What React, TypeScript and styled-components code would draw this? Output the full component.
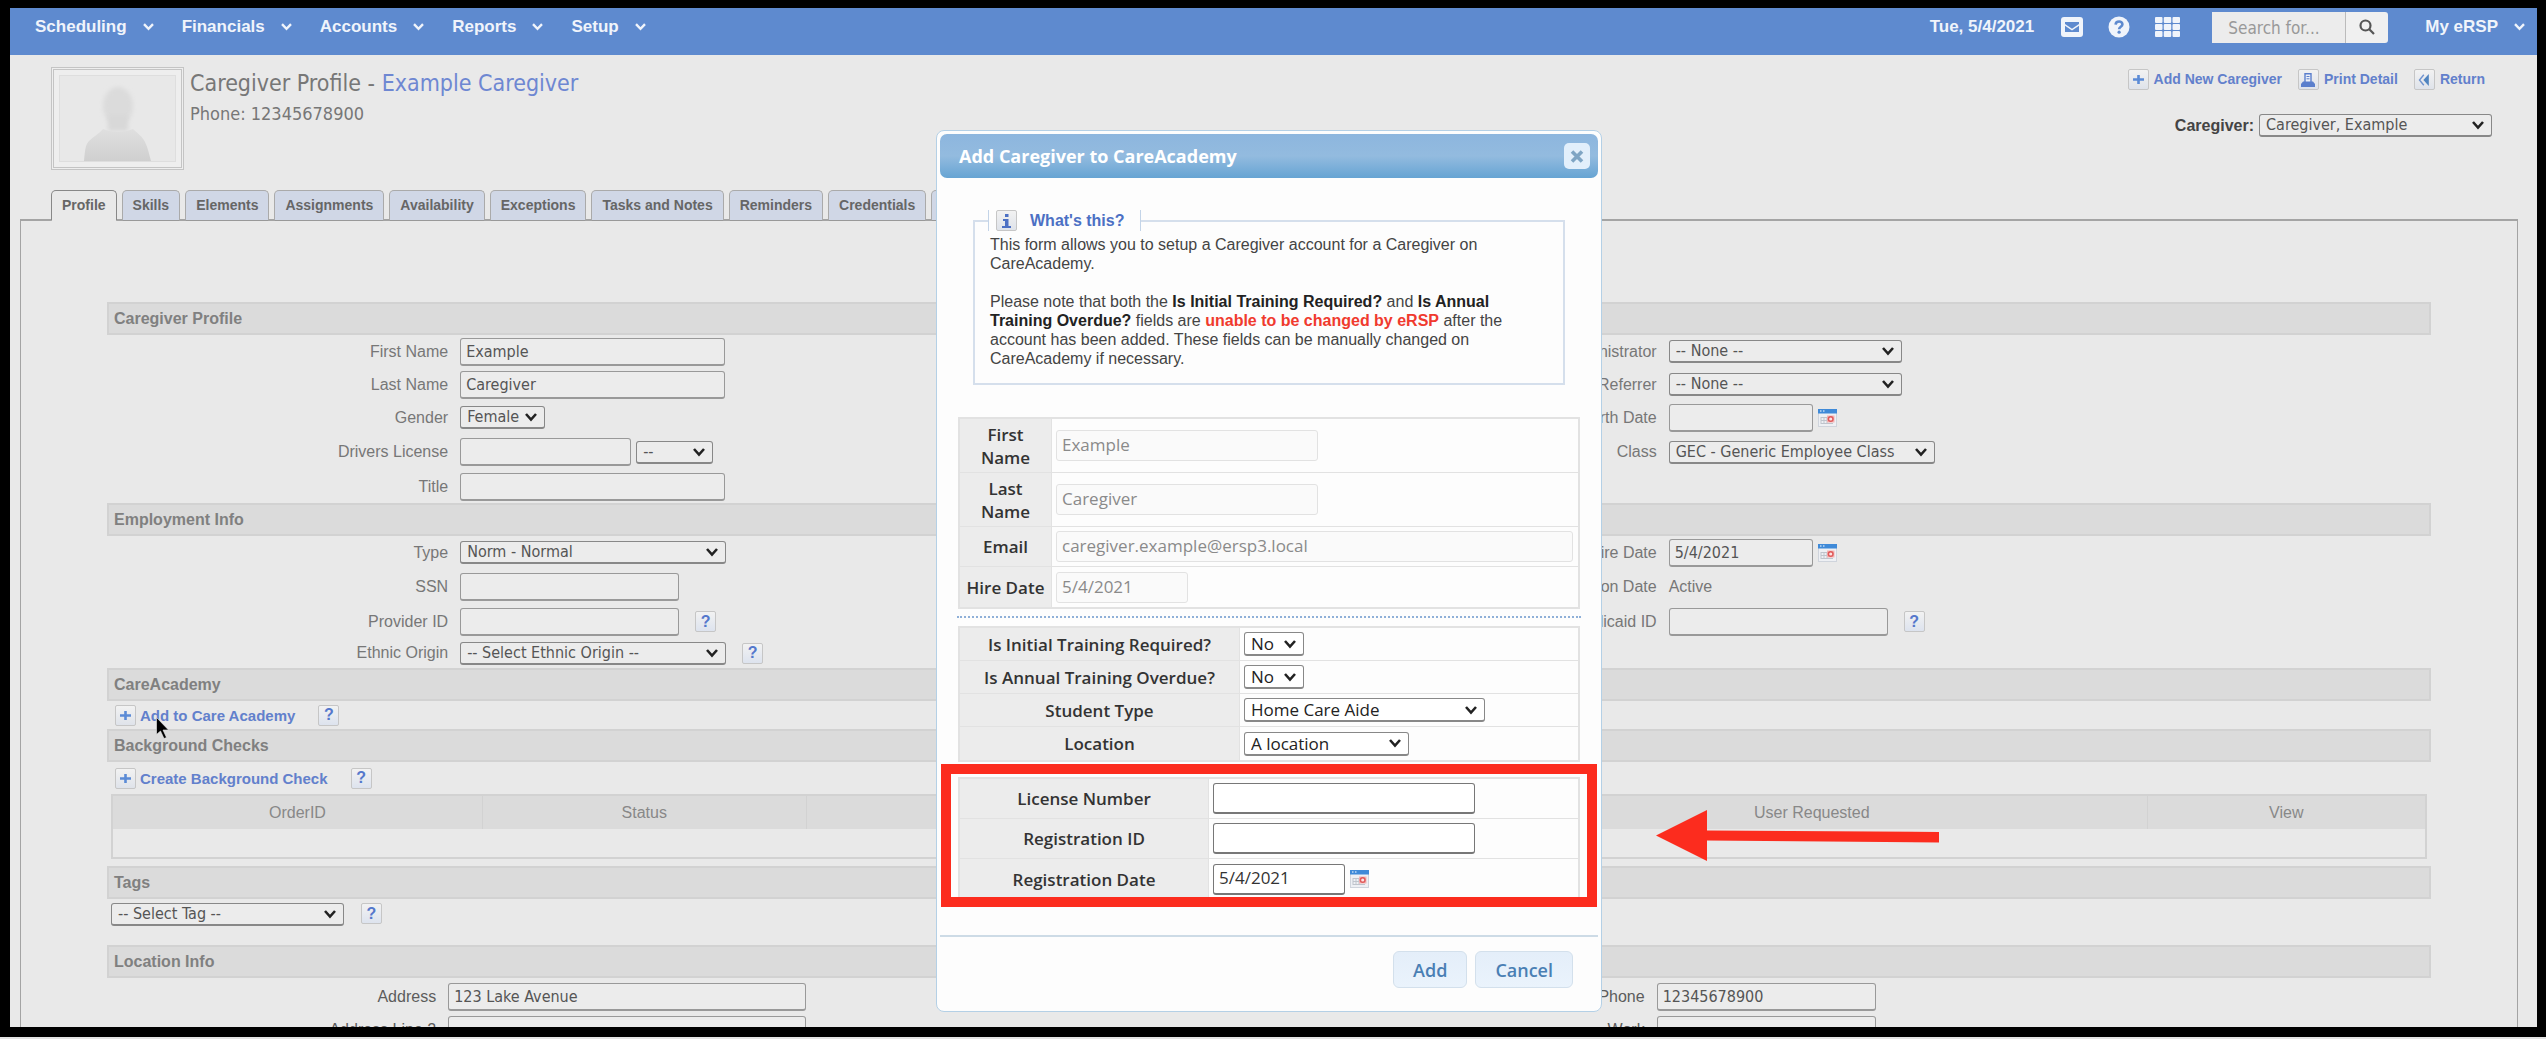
import React from 'react';
import styled, { createGlobalStyle, css } from 'styled-components';

const ARIAL = '"Liberation Sans", Arial, sans-serif';
const TAHOMA = '"DejaVu Sans Condensed", "Open Sans", sans-serif';
const LUCIDA = '"Open Sans", "Noto Sans", sans-serif';

const GlobalStyle = createGlobalStyle`
  *, *::before, *::after { box-sizing: border-box; }
  body { margin: 0; background: #000; font: 16px/20px ${ARIAL}; color: #777; }
  button, input, select { font: inherit; margin: 0; }
  a { text-decoration: none; color: inherit; }
`;

/* ---------- shell ---------- */

const Frame = styled.div`
  height: 100vh;
  padding: 8px 9px 10px 10px;
  background: #000;
  border-bottom: 2px solid #e4e4e4;
  overflow: hidden;
`;

const Page = styled.div`
  height: 100%;
  overflow: hidden;
  background: #e9e9e9;
`;

const NavBar = styled.nav`
  display: flex;
  align-items: center;
  height: 47px;
  padding: 0 12px 9px 25px;
  background: #5e8acf;
  color: #f0f4fb;
  font-size: 17px;
  font-weight: bold;
`;

const NavLink = styled.a`
  display: flex;
  align-items: center;
  gap: 16px;
  margin-right: 28px;
  &:last-child { margin-right: 0; }
`;

const NavRight = styled.div`
  display: flex;
  align-items: center;
  margin-left: auto;
`;

const NavIcons = styled.div`
  display: flex;
  align-items: center;
  gap: 25px;
  margin: 0 32px 0 27px;
  svg { display: block; }
`;

const IconLink = styled.a`
  display: block;
`;

const Search = styled.form`
  display: flex;
  height: 31px;
  margin-right: 37px;
`;

const SearchInput = styled.input`
  width: 134px;
  padding: 2px 16px 0;
  border: 0;
  border-right: 1px solid #bbb;
  background: #ececec;
  font: 17px/22px ${TAHOMA};
  &::placeholder { color: #999; opacity: 1; }
`;

const SearchButton = styled.button`
  display: grid;
  place-items: center;
  width: 42px;
  padding: 0;
  border: 0;
  border-radius: 0 3px 3px 0;
  background: #f0f0f0;
`;

/* ---------- page header ---------- */

const Header = styled.header`
  display: flex;
  align-items: flex-start;
  padding: 12px 45px 0 41px;
  height: 135px;
`;

const Avatar = styled.div`
  width: 133px;
  height: 103px;
  padding: 5px;
  border: 3px double #c4c4c4;
  background: #eee;
  svg { display: block; width: 100%; height: 100%; }
`;

const HeaderText = styled.div`
  margin-left: 6px;
  font-family: ${TAHOMA};
  color: #777;
`;

const Title = styled.h1`
  margin: 2px 0 4px;
  font-size: 23px;
  line-height: 28px;
  font-weight: normal;
  a { color: #6e87d2; }
`;

const Phone = styled.p`
  margin: 0;
  font-size: 18px;
  line-height: 26px;
`;

const HeaderRight = styled.div`
  display: flex;
  flex-direction: column;
  align-items: flex-end;
  gap: 24px;
  margin-left: auto;
  padding-top: 2px;
`;

const ActionLink = styled.a`
  position: relative;
  display: inline-flex;
  align-items: center;
  gap: 4px;
  color: #6280cc;
  font-size: 15px;
  font-weight: bold;
  line-height: 21px;
`;

const HeaderLinks = styled.div`
  display: flex;
  gap: 16px;
  padding-right: 7px;
  ${ActionLink} { font-size: 14px; gap: 5px; }
`;

const Picker = styled.div`
  display: flex;
  align-items: center;
  gap: 5px;
  color: #444;
  font-weight: bold;
`;

const Chip = styled.span`
  display: grid;
  place-items: center;
  flex: none;
  width: 21px;
  height: 21px;
  border: 1px solid #c6c6c6;
  border-radius: 2px;
  background: linear-gradient(#f2f2f2, #dfe3ea);
`;

const HelpButton = styled.button`
  display: grid;
  place-items: center;
  flex: none;
  width: 21px;
  height: 21px;
  padding: 0;
  border: 1px solid #c6c6c6;
  border-radius: 2px;
  background: linear-gradient(#f2f2f2, #dde3ee);
  color: #5578cc;
  font: bold 16px/18px ${ARIAL};
`;

/* ---------- tabs ---------- */

const Tabs = styled.div`
  position: relative;
  display: flex;
  gap: 5px;
  height: 31px;
  margin-bottom: -2px;
  padding-left: 41px;
`;

const Tab = styled.a<{ $active?: boolean }>`
  padding: 0 10px;
  border: 1px solid #aaa;
  border-bottom-color: #999;
  border-radius: 5px 5px 0 0;
  background: #d0d7e6;
  color: #666;
  font-size: 14px;
  font-weight: bold;
  line-height: 29px;
  ${(p) => p.$active && css`
    border-color: #888 #888 #e9e9e9;
    background: #e9e9e9;
  `}
`;

const Panel = styled.main`
  margin: 0 19px 0 10px;
  padding: 81px 86px 0;
  border: 2px solid #a4a4a4;
  border-width: 2px 1px 0;
`;

const SectionTitle = styled.h2`
  height: 33px;
  margin: 0;
  padding: 0 5px;
  border: 2px solid #d2d2d2;
  background: #dbdbdb;
  color: #808080;
  font-size: 16px;
  font-weight: bold;
  line-height: 29px;
`;

const Columns = styled.div<{ $shift?: boolean }>`
  display: grid;
  grid-template-columns: ${(p) => (p.$shift ? '341fr 867fr 341fr 774fr' : '353fr 855fr 353fr 762fr')};
  ${(p) => p.$shift && css`
    padding-top: 2px;
    color: #5c5c5c;
  `}
`;

const Label = styled.label<{ $h?: number }>`
  height: ${(p) => p.$h ?? 33}px;
  line-height: ${(p) => p.$h ?? 33}px;
  padding-right: 12px;
  text-align: right;
`;

const Field = styled.div<{ $h?: number }>`
  display: flex;
  align-items: center;
  gap: 5px;
  height: ${(p) => p.$h ?? 33}px;
`;

const HelpGap = styled.span`
  width: 6px;
`;

const TextBox = styled.input<{ $w: number }>`
  width: ${(p) => p.$w}px;
  height: 28px;
  padding: 0 5px;
  border: 1px solid #999;
  border-bottom-width: 2px;
  border-radius: 3px;
  background: #ececec;
  color: #555;
  font: 16px/22px ${TAHOMA};
`;

const ARROW =
  "url(\"data:image/svg+xml,%3Csvg xmlns='http://www.w3.org/2000/svg' width='14' height='10' viewBox='0 0 14 10'%3E%3Cpath d='M2 2l5 5.5L12 2' fill='none' stroke='%23222' stroke-width='2.6'/%3E%3C/svg%3E\")";

const Select = styled.select<{ $w: number }>`
  appearance: none;
  width: ${(p) => p.$w}px;
  height: 23px;
  padding: 0 20px 0 6px;
  border: 1px solid #888;
  border-bottom-width: 2px;
  border-radius: 3px;
  background: ${ARROW} no-repeat right 6px center #ececec;
  color: #555;
  font: 16px/20px ${TAHOMA};
`;

const LinkRow = styled.div<{ $h: number }>`
  display: flex;
  align-items: center;
  gap: 23px;
  height: ${(p) => p.$h}px;
  padding-left: 8px;
`;

const CheckTable = styled.table`
  width: calc(100% - 8px);
  margin: 0 4px 7px;
  border: 2px solid #d2d2d2;
  border-spacing: 0;
  table-layout: fixed;
  th {
    height: 33px;
    padding: 0;
    border-right: 1px solid #d2d2d2;
    background: #dbdbdb;
    color: #888;
    font-weight: normal;
  }
  th:last-child { border-right: 0; }
  td { height: 28px; padding: 0; }
`;

const Column = styled.col<{ $share: string }>`
  width: ${(p) => p.$share};
`;

const TagRow = styled.div`
  display: flex;
  gap: 17px;
  height: 46px;
  padding: 4px 4px 0;
`;

const Cursor = styled.svg`
  position: absolute;
  left: 41px;
  top: 12px;
`;

/* ---------- dialog ---------- */

const Overlay = styled.div`
  position: fixed;
  inset: 0;
  display: flex;
  justify-content: center;
  align-items: flex-start;
  padding: 130px 8px 0 0;
`;

const Dialog = styled.section`
  width: 666px;
  padding: 3px;
  border: 1px solid #b4d0e6;
  border-radius: 8px;
  background: #fdfdfd;
  color: #333;
`;

const DialogHead = styled.div`
  display: flex;
  align-items: center;
  justify-content: space-between;
  height: 44px;
  padding: 0 8px 0 19px;
  border-radius: 7px;
  background: linear-gradient(#8db6de, #93bbdf 50%, #66a4d3);
  color: #fff;
  font: bold 18px/24px ${LUCIDA};
`;

const DialogTitle = styled.h2`
  margin: 0;
  font: inherit;
`;

const CloseButton = styled.button`
  display: grid;
  place-items: center;
  width: 26px;
  height: 26px;
  padding: 0;
  border: 0;
  border-radius: 5px;
  background: #e2effb;
`;

const DialogBody = styled.div`
  padding: 32px 18px 34px;
`;

const Note = styled.fieldset`
  margin: 0 15px 32px;
  padding: 4px 15px 15px;
  border: 2px solid #d5dfec;
  font: 16px/19px ${ARIAL};
  color: #444;
  p { margin: 0 0 19px; }
  p:last-child { margin: 0; }
  strong { color: #222; }
  em { color: #f03a2e; font-style: normal; font-weight: bold; }
`;

const Legend = styled.legend`
  display: flex;
  align-items: center;
  gap: 13px;
  height: 21px;
  margin-left: -2px;
  padding: 0 16px 0 7px;
  border: solid #c3d4e8;
  border-width: 0 1px;
  color: #4c70c4;
  font-weight: bold;
`;

const FormTable = styled.table<{ $label: number }>`
  width: 100%;
  border: 2px solid #e2e2e2;
  border-spacing: 0;
  table-layout: fixed;
  font: 17px/23px ${LUCIDA};
  th {
    width: ${(p) => p.$label}px;
    padding: 0;
    background: #ececec;
    border-right: 1px solid #e2e2e2;
    color: #333;
    font-weight: 600;
    text-align: center;
  }
  td { padding: 0 5px 0 4px; }
  th, td { border-bottom: 1px solid #e2e2e2; }
  tr:last-child > * { border-bottom: 0; }
`;

const FormRow = styled.tr<{ $h: number }>`
  height: ${(p) => p.$h}px;
`;

const FormInput = styled.input<{ $w?: number }>`
  display: block;
  width: ${(p) => (p.$w ? `${p.$w}px` : '100%')};
  height: 31px;
  padding: 0 5px 2px;
  border: 1px solid #777;
  border-bottom-width: 2px;
  border-radius: 3px;
  background: #fff;
  color: #333;
  font: 17px/22px ${LUCIDA};
  &:disabled {
    border: 1px solid #e2e2e2;
    background: #fafafa;
    color: #8a8a8a;
  }
`;

const FormSelect = styled(Select)`
  display: block;
  height: 24px;
  background-color: #fff;
  color: #222;
  font: 17px/21px ${LUCIDA};
`;

const DateCell = styled.div`
  display: flex;
  align-items: center;
  gap: 5px;
`;

const Dotted = styled.hr`
  margin: 7px -1px 8px;
  border: 0;
  border-top: 2px dotted #8fb0d8;
`;

const Highlighted = styled.div`
  position: relative;
  margin-top: 15px;
`;

const RedBox = styled.div`
  position: absolute;
  inset: -13px -17px -6px;
  border: 10px solid #fc2c1e;
`;

const RedArrow = styled.svg`
  position: absolute;
  top: 33px;
  left: calc(100% + 76px);
`;

const DialogFoot = styled.div`
  display: flex;
  justify-content: flex-end;
  gap: 8px;
  padding: 14px 25px 20px;
  border-top: 2px solid #cddbe6;
`;

const DialogButton = styled.button`
  height: 37px;
  padding: 0 19px;
  border: 1px solid #d3e0ec;
  border-radius: 6px;
  background: linear-gradient(#e4eef9, #eaf3fc);
  color: #4a7fb4;
  font: 600 18px/24px ${LUCIDA};
`;

/* ---------- icons ---------- */

const Chevron = () => (
  <svg width="11" height="8" viewBox="0 0 11 8">
    <path d="M1 1.2l4.5 4.6L10 1.2" fill="none" stroke="#f0f4fb" strokeWidth="2.4" />
  </svg>
);

const PlusIcon = () => (
  <Chip>
    <svg width="11" height="11" viewBox="0 0 11 11">
      <path d="M5.5 1v9M0 5.5h11" stroke="#5b8bd6" strokeWidth="2.6" />
    </svg>
  </Chip>
);

const PrintIcon = () => (
  <Chip>
    <svg width="14" height="14" viewBox="0 0 14 14">
      <path d="M4 9V.8h6V9" fill="#eef1f8" stroke="#5b7fcc" strokeWidth="1.4" />
      <path d="M5.5 3.500h3M5.5 5.800h3" stroke="#5b7fcc" />
      <path d="M2 8.500h10l2 2.500v3H0v-3z" fill="#5b7fcc" />
    </svg>
  </Chip>
);

const ReturnIcon = () => (
  <Chip>
    <svg width="12" height="12" viewBox="0 0 12 12">
      <path d="M5.800 .8L1.500 6l4.300 5.200" fill="none" stroke="#6f93cf" strokeWidth="1.400" />
      <path d="M10.800 0v12L5.400 6z" fill="#4f84c0" />
    </svg>
  </Chip>
);

const CalendarIcon = () => (
  <svg width="19" height="18" viewBox="0 0 19 18">
    <rect x=".5" y=".5" width="18" height="17" fill="#eef0f4" stroke="#cfd4dc" />
    <rect width="19" height="4.500" fill="#3f8ad8" />
    <path d="M2 2h1.500M5 2h1.500" stroke="#fff" strokeWidth="1.200" />
    <path d="M3 8.500h6M3 11.500h6M3 14.500h12M3 8v7M6 8v7M9 8v7" stroke="#bfc4cc" />
    <rect x="9" y="6.500" width="7.500" height="7" fill="#f2b4b4" />
    <circle cx="12.700" cy="10" r="2.300" fill="#fbe3e3" stroke="#e05a5a" strokeWidth="1.500" />
  </svg>
);

const Help = () => <HelpButton type="button" aria-label="Help">?</HelpButton>;

/* ---------- data ---------- */

const menus = ['Scheduling', 'Financials', 'Accounts', 'Reports', 'Setup'];
const tabs = ['Profile', 'Skills', 'Elements', 'Assignments', 'Availability', 'Exceptions', 'Tasks and Notes', 'Reminders', 'Credentials', 'Documents'];

type DropProps = { id: string; w: number; value: string };
const Drop = ({ id, w, value }: DropProps) => (
  <Select id={id} $w={w} aria-label={id === 'tag' ? 'Tag' : undefined}><option>{value}</option></Select>
);
const FormDrop = ({ id, w, value }: DropProps) => (
  <FormSelect id={id} $w={w}><option>{value}</option></FormSelect>
);

export default function App() {
  return (
    <>
      <GlobalStyle />
      <Frame>
        <Page>
          <NavBar>
            {menus.map((m) => (
              <NavLink href="#" key={m}>{m}<Chevron /></NavLink>
            ))}
            <NavRight>
              <span>Tue, 5/4/2021</span>
              <NavIcons>
                <IconLink href="#" aria-label="Messages">
                  <svg width="22" height="22" viewBox="0 0 22 22">
                    <rect y="1" width="22" height="20" rx="3" fill="#f0f4fb" />
                    <path d="M4 6h14v2l-7 4.800L4 8z" fill="#5e8acf" />
                    <path d="M4 9.800l7 4.800 7-4.800V16H4z" fill="#5e8acf" />
                  </svg>
                </IconLink>
                <IconLink href="#" aria-label="Help center">
                  <svg width="22" height="22" viewBox="0 0 22 22">
                    <circle cx="11" cy="11" r="10.500" fill="#f0f4fb" />
                    <path d="M7.600 8.600C7.800 4.500 14.600 4.600 14.400 8.500c-.1 2.300-3.300 2.300-3.300 4.700" fill="none" stroke="#5e8acf" strokeWidth="2.600" />
                    <circle cx="11.100" cy="16.200" r="1.600" fill="#5e8acf" />
                  </svg>
                </IconLink>
                <IconLink href="#" aria-label="Apps">
                  <svg width="25" height="20" viewBox="0 0 25 20" fill="#f0f4fb">
                    {[0, 8.75, 17.5].map((x) => [0, 7, 14].map((y) => (
                      <rect key={`${x}-${y}`} x={x} y={y} width="7.500" height="6" rx="1" />
                    )))}
                  </svg>
                </IconLink>
              </NavIcons>
              <Search>
                <SearchInput placeholder="Search for..." aria-label="Search" />
                <SearchButton type="button" aria-label="Go">
                  <svg width="16" height="16" viewBox="0 0 16 16" fill="none" stroke="#555" strokeWidth="2.200">
                    <circle cx="6.500" cy="6.500" r="5" />
                    <path d="M10.300 10.300L15 15" />
                  </svg>
                </SearchButton>
              </Search>
              <NavLink href="#">My eRSP<Chevron /></NavLink>
            </NavRight>
          </NavBar>

          <Header>
            <Avatar>
              <svg viewBox="0 0 117 87" preserveAspectRatio="none">
                <defs>
                  <linearGradient id="shade" x1="0" y1="0" x2="0" y2="1">
                    <stop offset="0" stopColor="#dfdfdf" />
                    <stop offset="1" stopColor="#cfcfcf" />
                  </linearGradient>
                  <filter id="soft" x="-20%" y="-20%" width="140%" height="140%"><feGaussianBlur stdDeviation="2" /></filter>
                </defs>
                <rect x=".5" y=".5" width="116" height="86" fill="#e8e8e8" stroke="#dedede" />
                <ellipse filter="url(#soft)" cx="59" cy="31" rx="15" ry="19" fill="#dbdbdb" />
                <path filter="url(#soft)" d="M49 40h20v16H49z" fill="#d8d8d8" />
                <path d="M25 86c1-9 1-16 5-20 5-5 10-7 14-12 9 4 21 4 30 0 5 5 9 7 12 13 3 6 4 12 6 19z" fill="url(#shade)" />
              </svg>
            </Avatar>
            <HeaderText>
              <Title>Caregiver Profile - <a href="#">Example Caregiver</a></Title>
              <Phone>Phone: 12345678900</Phone>
            </HeaderText>
            <HeaderRight>
              <HeaderLinks>
                <ActionLink href="#"><PlusIcon />Add New Caregiver</ActionLink>
                <ActionLink href="#"><PrintIcon />Print Detail</ActionLink>
                <ActionLink href="#"><ReturnIcon />Return</ActionLink>
              </HeaderLinks>
              <Picker>
                <label htmlFor="caregiver">Caregiver:</label>
                <Drop id="caregiver" w={233} value="Caregiver, Example" />
              </Picker>
            </HeaderRight>
          </Header>

          <Tabs>
            {tabs.map((t, i) => <Tab href="#" key={t} $active={i === 0}>{t}</Tab>)}
          </Tabs>

          <Panel>
            <SectionTitle>Caregiver Profile</SectionTitle>
            <Columns>
              <Label htmlFor="first">First Name</Label>
              <Field><TextBox id="first" $w={265} defaultValue="Example" /></Field>
              <Label htmlFor="admin">Administrator</Label>
              <Field><Drop id="admin" w={233} value="-- None --" /></Field>

              <Label htmlFor="last">Last Name</Label>
              <Field><TextBox id="last" $w={265} defaultValue="Caregiver" /></Field>
              <Label htmlFor="referrer">Referrer</Label>
              <Field><Drop id="referrer" w={233} value="-- None --" /></Field>

              <Label htmlFor="gender">Gender</Label>
              <Field><Drop id="gender" w={85} value="Female" /></Field>
              <Label htmlFor="birth">Birth Date</Label>
              <Field><TextBox id="birth" $w={144} /><CalendarIcon /></Field>

              <Label $h={36} htmlFor="license">Drivers License</Label>
              <Field $h={36}>
                <TextBox id="license" $w={171} />
                <Drop id="state" w={77} value="--" />
              </Field>
              <Label $h={36} htmlFor="class">Class</Label>
              <Field $h={36}><Drop id="class" w={266} value="GEC - Generic Employee Class" /></Field>

              <Label htmlFor="title">Title</Label>
              <Field><TextBox id="title" $w={265} /></Field>
            </Columns>

            <SectionTitle>Employment Info</SectionTitle>
            <Columns>
              <Label htmlFor="type">Type</Label>
              <Field><Drop id="type" w={266} value="Norm - Normal" /></Field>
              <Label htmlFor="hire">Hire Date</Label>
              <Field><TextBox id="hire" $w={144} defaultValue="5/4/2021" /><CalendarIcon /></Field>

              <Label $h={36} htmlFor="ssn">SSN</Label>
              <Field $h={36}><TextBox id="ssn" $w={219} /></Field>
              <Label as="span" $h={36}>Termination Date</Label>
              <Field $h={36}>Active</Field>

              <Label htmlFor="provider">Provider ID</Label>
              <Field><TextBox id="provider" $w={219} /><HelpGap /><Help /></Field>
              <Label htmlFor="medicaid">Medicaid ID</Label>
              <Field><TextBox id="medicaid" $w={219} /><HelpGap /><Help /></Field>

              <Label $h={30} htmlFor="ethnic">Ethnic Origin</Label>
              <Field $h={30}><Drop id="ethnic" w={266} value="-- Select Ethnic Origin --" /><HelpGap /><Help /></Field>
            </Columns>

            <SectionTitle>CareAcademy</SectionTitle>
            <LinkRow $h={28}>
              <ActionLink href="#">
                <PlusIcon />Add to Care Academy
                <Cursor width="13" height="22" viewBox="0 0 13 22">
                  <path d="M.5.500v17l4-3.500 3.500 7.500 2.500-1-3.500-7.500H12.500z" fill="#000" stroke="#eee" strokeWidth=".6" />
                </Cursor>
              </ActionLink>
              <Help />
            </LinkRow>

            <SectionTitle>Background Checks</SectionTitle>
            <LinkRow $h={32}>
              <ActionLink href="#"><PlusIcon />Create Background Check</ActionLink>
              <Help />
            </LinkRow>
            <CheckTable>
              <colgroup>
                <Column $share="16%" />
                <Column $share="14%" />
                <Column $share="15%" />
                <Column $share="14%" />
                <Column $share="29%" />
                <Column $share="12%" />
              </colgroup>
              <thead>
                <tr><th>OrderID</th><th>Status</th><th /><th /><th>User Requested</th><th>View</th></tr>
              </thead>
              <tbody><tr><td colSpan={6} /></tr></tbody>
            </CheckTable>

            <SectionTitle>Tags</SectionTitle>
            <TagRow>
              <Drop id="tag" w={233} value="-- Select Tag --" />
              <Help />
            </TagRow>

            <SectionTitle>Location Info</SectionTitle>
            <Columns $shift>
              <Label htmlFor="address">Address</Label>
              <Field><TextBox id="address" $w={358} defaultValue="123 Lake Avenue" /></Field>
              <Label htmlFor="phone">Phone</Label>
              <Field><TextBox id="phone" $w={219} defaultValue="12345678900" /></Field>
              <Label htmlFor="address2">Address Line 2</Label>
              <Field><TextBox id="address2" $w={358} /></Field>
              <Label htmlFor="work">Work</Label>
              <Field><TextBox id="work" $w={219} /></Field>
            </Columns>
          </Panel>
        </Page>
      </Frame>

      <Overlay>
        <Dialog role="dialog" aria-labelledby="dialog-title">
          <DialogHead>
            <DialogTitle id="dialog-title">Add Caregiver to CareAcademy</DialogTitle>
            <CloseButton type="button" aria-label="Close">
              <svg width="14" height="13" viewBox="0 0 14 13">
                <path d="M2 1.500l10 10M12 1.500l-10 10" stroke="#7fa5c4" strokeWidth="3.600" />
              </svg>
            </CloseButton>
          </DialogHead>

          <DialogBody>
            <Note>
              <Legend>
                <Chip>
                  <svg width="9" height="14" viewBox="0 0 9 14" fill="#4c70c4">
                    <rect x="3" width="3.500" height="3" />
                    <path d="M1 5h5.500v7H9v2H0v-2h3V7H1z" />
                  </svg>
                </Chip>
                What's this?
              </Legend>
              <p>This form allows you to setup a Caregiver account for a Caregiver on CareAcademy.</p>
              <p>
                Please note that both the <strong>Is Initial Training Required?</strong> and{' '}
                <strong>Is Annual Training Overdue?</strong> fields are{' '}
                <em>unable to be changed by eRSP</em> after the account has been added. These
                fields can be manually changed on CareAcademy if necessary.
              </p>
            </Note>

            <FormTable $label={92}>
              <tbody>
                <FormRow $h={54}>
                  <th><label htmlFor="f-first">First<br />Name</label></th>
                  <td><FormInput id="f-first" $w={262} disabled defaultValue="Example" /></td>
                </FormRow>
                <FormRow $h={54}>
                  <th><label htmlFor="f-last">Last<br />Name</label></th>
                  <td><FormInput id="f-last" $w={262} disabled defaultValue="Caregiver" /></td>
                </FormRow>
                <FormRow $h={40}>
                  <th><label htmlFor="f-email">Email</label></th>
                  <td><FormInput id="f-email" disabled defaultValue="caregiver.example@ersp3.local" /></td>
                </FormRow>
                <FormRow $h={40}>
                  <th><label htmlFor="f-hire">Hire Date</label></th>
                  <td><FormInput id="f-hire" $w={132} disabled defaultValue="5/4/2021" /></td>
                </FormRow>
              </tbody>
            </FormTable>

            <Dotted />

            <FormTable $label={280}>
              <tbody>
                <FormRow $h={33}>
                  <th><label htmlFor="f-initial">Is Initial Training Required?</label></th>
                  <td><FormDrop id="f-initial" w={60} value="No" /></td>
                </FormRow>
                <FormRow $h={33}>
                  <th><label htmlFor="f-annual">Is Annual Training Overdue?</label></th>
                  <td><FormDrop id="f-annual" w={60} value="No" /></td>
                </FormRow>
                <FormRow $h={33}>
                  <th><label htmlFor="f-student">Student Type</label></th>
                  <td><FormDrop id="f-student" w={241} value="Home Care Aide" /></td>
                </FormRow>
                <FormRow $h={33}>
                  <th><label htmlFor="f-location">Location</label></th>
                  <td><FormDrop id="f-location" w={165} value="A location" /></td>
                </FormRow>
              </tbody>
            </FormTable>

            <Highlighted>
              <FormTable $label={249}>
                <tbody>
                  <FormRow $h={40}>
                    <th><label htmlFor="f-license">License Number</label></th>
                    <td><FormInput id="f-license" $w={262} /></td>
                  </FormRow>
                  <FormRow $h={40}>
                    <th><label htmlFor="f-regid">Registration ID</label></th>
                    <td><FormInput id="f-regid" $w={262} /></td>
                  </FormRow>
                  <FormRow $h={40}>
                    <th><label htmlFor="f-regdate">Registration Date</label></th>
                    <td>
                      <DateCell>
                        <FormInput id="f-regdate" $w={132} defaultValue="5/4/2021" />
                        <CalendarIcon />
                      </DateCell>
                    </td>
                  </FormRow>
                </tbody>
              </FormTable>
              <RedBox />
              <RedArrow width="283" height="52" viewBox="0 0 283 52">
                <path d="M0 25.500L51 0v20.500l232 1.500v10.500L51 30.500V51z" fill="#fc2c1e" />
              </RedArrow>
            </Highlighted>
          </DialogBody>

          <DialogFoot>
            <DialogButton type="button">Add</DialogButton>
            <DialogButton type="button">Cancel</DialogButton>
          </DialogFoot>
        </Dialog>
      </Overlay>
    </>
  );
}
